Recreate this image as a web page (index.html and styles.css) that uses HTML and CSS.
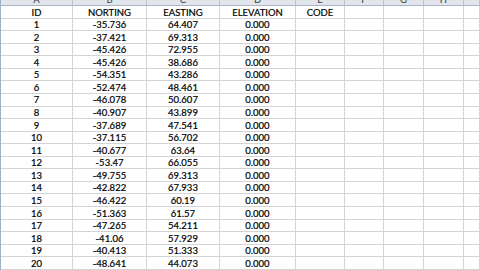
FILE: index.html
```html
<!DOCTYPE html>
<html>
<head>
<meta charset="utf-8">
<link rel="stylesheet" href="styles.css">
</head>
<body>
<div class="sheet">
  <div class="hd">A</div><div class="hd">B</div><div class="hd">C</div><div class="hd">D</div><div class="hd">E</div><div class="hd">F</div><div class="hd">G</div><div class="hd">H</div><div class="hd"></div>

  <div class="c">ID</div><div class="c">NORTING</div><div class="c">EASTING</div><div class="c">ELEVATION</div><div class="c">CODE</div><div class="c"></div><div class="c"></div><div class="c"></div><div class="c"></div>
  <div class="c">1</div><div class="c">-35.736</div><div class="c">64.407</div><div class="c">0.000</div><div class="c"></div><div class="c"></div><div class="c"></div><div class="c"></div><div class="c"></div>
  <div class="c">2</div><div class="c">-37.421</div><div class="c">69.313</div><div class="c">0.000</div><div class="c"></div><div class="c"></div><div class="c"></div><div class="c"></div><div class="c"></div>
  <div class="c">3</div><div class="c">-45.426</div><div class="c">72.955</div><div class="c">0.000</div><div class="c"></div><div class="c"></div><div class="c"></div><div class="c"></div><div class="c"></div>
  <div class="c">4</div><div class="c">-45.426</div><div class="c">38.686</div><div class="c">0.000</div><div class="c"></div><div class="c"></div><div class="c"></div><div class="c"></div><div class="c"></div>
  <div class="c">5</div><div class="c">-54.351</div><div class="c">43.286</div><div class="c">0.000</div><div class="c"></div><div class="c"></div><div class="c"></div><div class="c"></div><div class="c"></div>
  <div class="c">6</div><div class="c">-52.474</div><div class="c">48.461</div><div class="c">0.000</div><div class="c"></div><div class="c"></div><div class="c"></div><div class="c"></div><div class="c"></div>
  <div class="c">7</div><div class="c">-46.078</div><div class="c">50.607</div><div class="c">0.000</div><div class="c"></div><div class="c"></div><div class="c"></div><div class="c"></div><div class="c"></div>
  <div class="c">8</div><div class="c">-40.907</div><div class="c">43.899</div><div class="c">0.000</div><div class="c"></div><div class="c"></div><div class="c"></div><div class="c"></div><div class="c"></div>
  <div class="c">9</div><div class="c">-37.689</div><div class="c">47.541</div><div class="c">0.000</div><div class="c"></div><div class="c"></div><div class="c"></div><div class="c"></div><div class="c"></div>
  <div class="c">10</div><div class="c">-37.115</div><div class="c">56.702</div><div class="c">0.000</div><div class="c"></div><div class="c"></div><div class="c"></div><div class="c"></div><div class="c"></div>
  <div class="c">11</div><div class="c">-40.677</div><div class="c">63.64</div><div class="c">0.000</div><div class="c"></div><div class="c"></div><div class="c"></div><div class="c"></div><div class="c"></div>
  <div class="c">12</div><div class="c">-53.47</div><div class="c">66.055</div><div class="c">0.000</div><div class="c"></div><div class="c"></div><div class="c"></div><div class="c"></div><div class="c"></div>
  <div class="c">13</div><div class="c">-49.755</div><div class="c">69.313</div><div class="c">0.000</div><div class="c"></div><div class="c"></div><div class="c"></div><div class="c"></div><div class="c"></div>
  <div class="c">14</div><div class="c">-42.822</div><div class="c">67.933</div><div class="c">0.000</div><div class="c"></div><div class="c"></div><div class="c"></div><div class="c"></div><div class="c"></div>
  <div class="c">15</div><div class="c">-46.422</div><div class="c">60.19</div><div class="c">0.000</div><div class="c"></div><div class="c"></div><div class="c"></div><div class="c"></div><div class="c"></div>
  <div class="c">16</div><div class="c">-51.363</div><div class="c">61.57</div><div class="c">0.000</div><div class="c"></div><div class="c"></div><div class="c"></div><div class="c"></div><div class="c"></div>
  <div class="c">17</div><div class="c">-47.265</div><div class="c">54.211</div><div class="c">0.000</div><div class="c"></div><div class="c"></div><div class="c"></div><div class="c"></div><div class="c"></div>
  <div class="c">18</div><div class="c">-41.06</div><div class="c">57.929</div><div class="c">0.000</div><div class="c"></div><div class="c"></div><div class="c"></div><div class="c"></div><div class="c"></div>
  <div class="c">19</div><div class="c">-40.413</div><div class="c">51.333</div><div class="c">0.000</div><div class="c"></div><div class="c"></div><div class="c"></div><div class="c"></div><div class="c"></div>
  <div class="c">20</div><div class="c">-48.641</div><div class="c">44.073</div><div class="c">0.000</div><div class="c"></div><div class="c"></div><div class="c"></div><div class="c"></div><div class="c"></div>
</div>
</body>
</html>
```
FILE: styles.css
```css
html, body {
  margin: 0;
  padding: 0;
  background: #ffffff;
  overflow: hidden;
  width: 480px;
  height: 270px;
}

.sheet {
  display: grid;
  grid-template-columns: 72px 74px 73px 76px 49px 39px 40px 40px 16px;
  grid-template-rows: 16px;
  grid-auto-rows: 12.57px;
  margin-top: -10px;
  font-family: Lato, "Liberation Sans", sans-serif;
  font-size: 9.5px;
  color: #000000;
  -webkit-text-stroke: 0.2px #000000;
  border-left: 1px solid #9fb3c8;
  box-sizing: border-box;
  width: 480px;
  overflow: hidden;
}

.hd {
  background: #e2e6ec;
  border-right: 1px solid #bcc4ce;
  border-bottom: 1px solid #a9b6c5;
  color: #3a3a3a;
  -webkit-text-stroke: 0;
  display: flex;
  align-items: flex-end;
  justify-content: center;
  line-height: 1;
  padding-bottom: 1px;
  box-sizing: border-box;
}

.c {
  border-right: 1px solid #d4d4d4;
  border-bottom: 1px solid #d4d4d4;
  display: flex;
  align-items: center;
  justify-content: center;
  line-height: 1;
  box-sizing: border-box;
  white-space: nowrap;
  padding-top: 1px;
}
```
